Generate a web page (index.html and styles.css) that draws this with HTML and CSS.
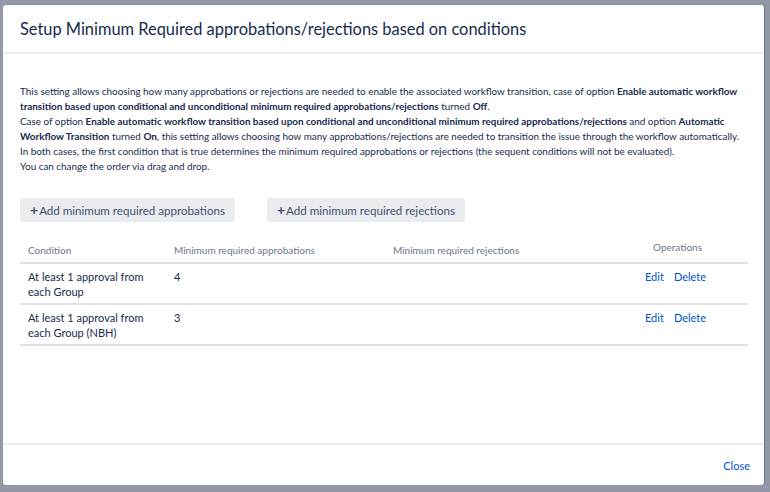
FILE: index.html
```html
<html>
<head>
	<link rel="stylesheet" href="styles.css">
</head>
<body>
	<div class="dialog">
		<div class="dialog-header">
			<h2 class="dialog-title">Setup Minimum Required approbations/rejections based on conditions</h2>
		</div>
		<div class="dialog-body">
			<p class="intro">
				This setting allows choosing how many approbations or rejections are needed to enable the associated workflow transition, case of option <b>Enable automatic workflow transition based upon conditional and unconditional minimum required approbations/rejections</b> turned <b>Off</b>.<br>
				Case of option <b>Enable automatic workflow transition based upon conditional and unconditional minimum required approbations/rejections</b> and option <b>Automatic Workflow Transition</b> turned <b>On</b>, this setting allows choosing how many approbations/rejections are needed to transition the issue through the workflow automatically.<br>
				In both cases, the first condition that is true determines the minimum required approbations or rejections (the sequent conditions will not be evaluated).<br>
				You can change the order via drag and drop.
			</p>

			<div class="actions">
				<button class="btn"><span class="plus">+</span>Add minimum required approbations</button>
				<button class="btn"><span class="plus">+</span>Add minimum required rejections</button>
			</div>

			<table class="conditions">
				<thead>
					<tr>
						<th class="col-cond">Condition</th>
						<th class="col-appr">Minimum required approbations</th>
						<th class="col-rej">Minimum required rejections</th>
						<th class="col-ops">Operations</th>
					</tr>
				</thead>
				<tbody>
					<tr>
						<td>At least 1 approval from each Group</td>
						<td>4</td>
						<td></td>
						<td class="ops"><a href="#">Edit</a><a href="#">Delete</a></td>
					</tr>
					<tr>
						<td>At least 1 approval from each Group (NBH)</td>
						<td>3</td>
						<td></td>
						<td class="ops"><a href="#">Edit</a><a href="#">Delete</a></td>
					</tr>
				</tbody>
			</table>
		</div>
		<div class="dialog-footer">
			<a href="#" class="close">Close</a>
		</div>
	</div>
</body>
</html>
```

FILE: styles.css
```css
body{
	margin: 0;
	height: 492px;
	background-color: #9298a6;
	font-family: Lato, "Open Sans", sans-serif;
	color: #172b4d;
	overflow: hidden;
}

.dialog{
	margin: 5px 0 0 3px;
	width: 761px;
	height: 480px;
	background-color: #fff;
	border-radius: 3px;
	display: flex;
	flex-direction: column;
	box-shadow: 1px 0 1px rgba(9, 30, 66, 0.25);
}

.dialog-header{
	height: 47px;
	border-bottom: 2px solid #ebecf0;
	display: flex;
	align-items: center;
	padding: 0 17px;
}
.dialog-title{
	margin: 0;
	font-size: 16.4px;
	font-weight: normal;
	color: #172b4d;
}

.dialog-body{
	flex: 1;
	padding: 30px 17px 0 17px;
}

.intro{
	margin: 0 -5px 0 0;
	font-size: 9.9px;
	line-height: 15px;
}
.intro b{
	font-weight: bold;
}

.actions{
	display: flex;
	gap: 32px;
	margin-top: 24px;
}
.btn{
	height: 24px;
	border: none;
	border-radius: 3px;
	background-color: #ebecf0;
	color: #42526e;
	font-family: inherit;
	font-size: 11.6px;
	padding: 0 10px;
	display: flex;
	align-items: center;
}
.plus{
	font-weight: bold;
	font-size: 14px;
	margin-right: 1px;
	margin-top: -2px;
}

.conditions{
	margin-top: 16px;
	width: 728px;
	border-collapse: collapse;
	font-size: 11px;
}
.conditions th{
	text-align: left;
	font-weight: normal;
	color: #6b778c;
	font-size: 10px;
	padding: 6px 8px 6px 8px;
	border-bottom: 2px solid #dfe1e6;
}
.conditions th.col-ops{
	vertical-align: top;
	padding: 3px 8px 0 22px;
}
.col-cond{ width: 130px; }
.col-appr{ width: 203px; }
.col-rej{ width: 230px; }

.conditions td{
	vertical-align: top;
	padding: 5px 8px 4px 8px;
	line-height: 15px;
	border-bottom: 2px solid #dfe1e6;
}
.conditions td.ops{
	padding-left: 14px;
}
.ops a{
	color: #0052cc;
	text-decoration: none;
	margin-right: 10px;
}

.dialog-footer{
	height: 40px;
	border-top: 2px solid #ebecf0;
	display: flex;
	align-items: center;
	justify-content: flex-end;
	padding: 0 14px;
}
.close{
	color: #0052cc;
	text-decoration: none;
	font-size: 11px;
}
```
